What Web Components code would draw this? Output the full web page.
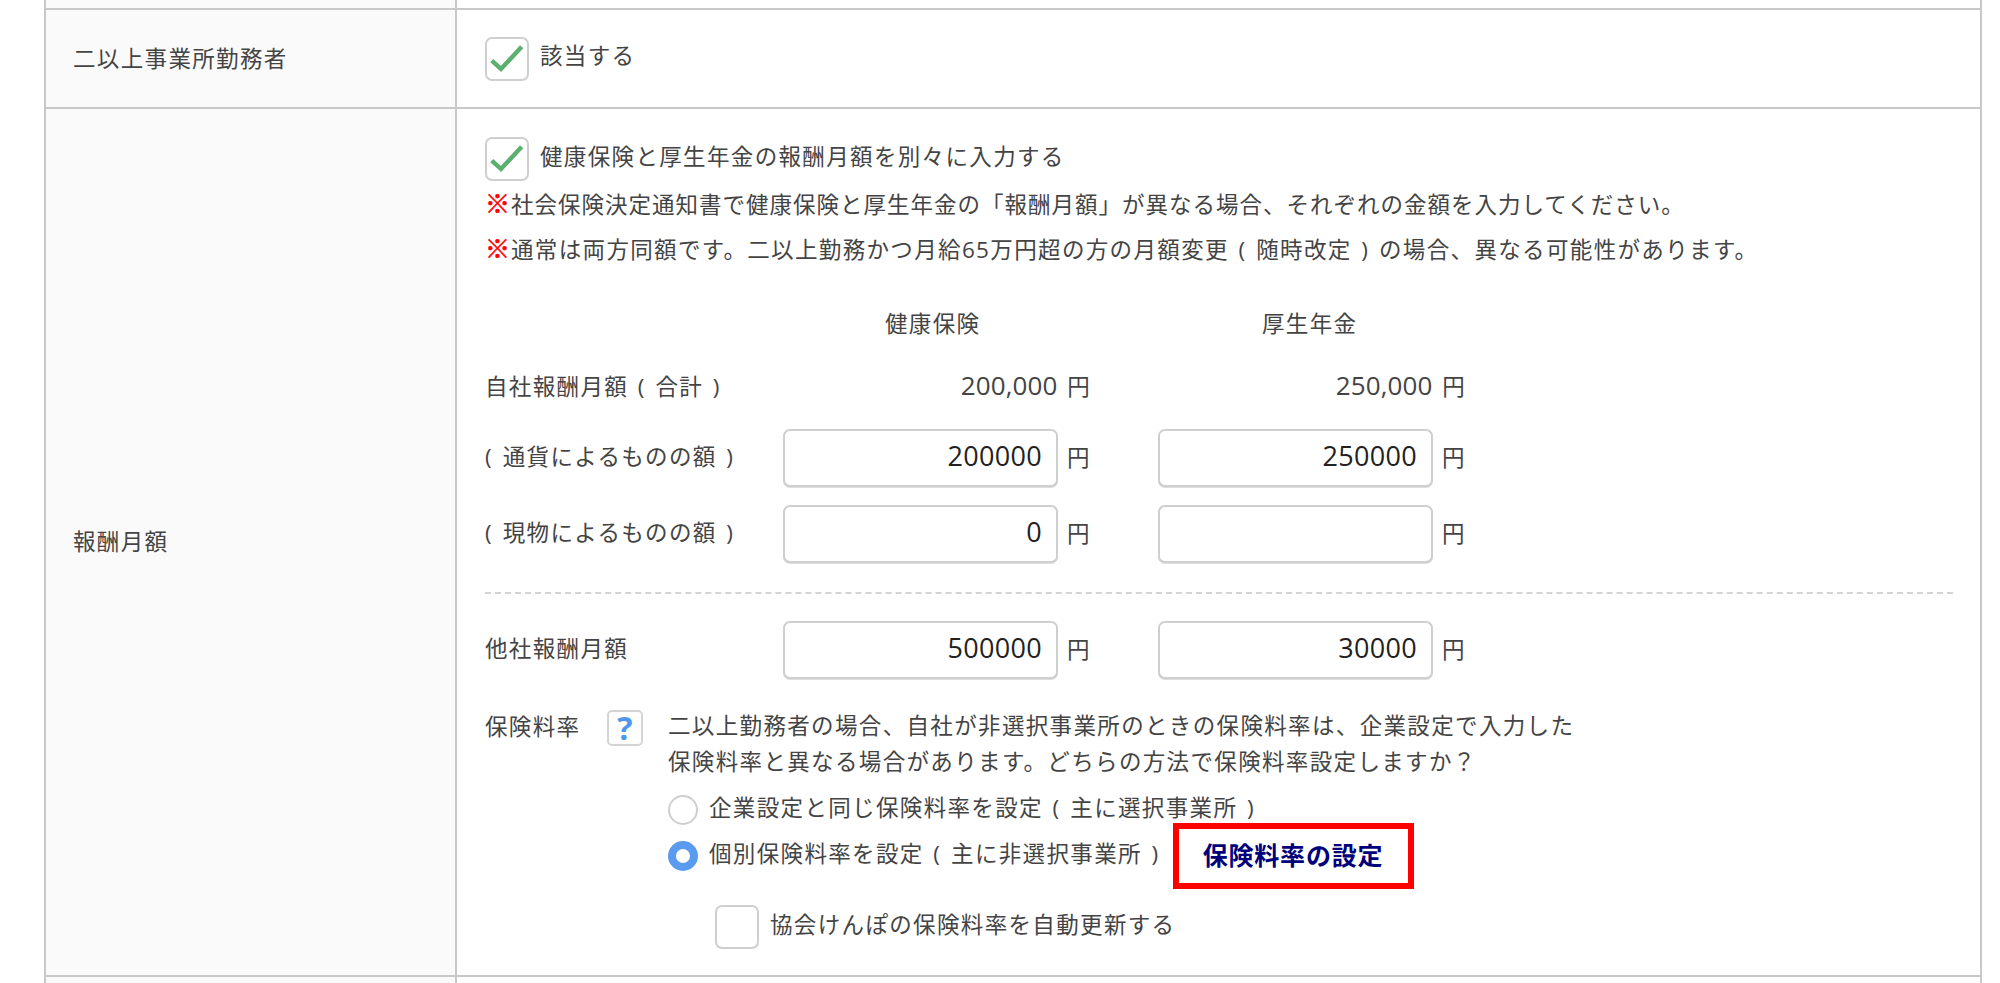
<!DOCTYPE html>
<html lang="ja"><head><meta charset="utf-8">
<style>
html,body{margin:0;padding:0;background:#fff;height:983px;overflow:hidden}
body{font-family:"Open Sans","Noto Sans CJK JP",sans-serif;font-size:22.5px;letter-spacing:1.35px;word-spacing:2.5px;color:#444}
</style></head><body>
<form-table>
  <form-row style="--h:10px"></form-row>
  <form-row style="--h:99px" center>
    <span slot="label">二以上事業所勤務者</span>
    <check-box checked>該当する</check-box>
  </form-row>
  <form-row style="--h:868px" pad>
    <span slot="label">報酬月額</span>
    <check-box checked>健康保険と厚生年金の報酬月額を別々に入力する</check-box>
    <note-line style="letter-spacing:1px">社会保険決定通知書で健康保険と厚生年金の「報酬月額」が異なる場合、それぞれの金額を入力してください。</note-line>
    <note-line>通常は両方同額です。二以上勤務かつ月給65万円超の方の月額変更 ( 随時改定 ) の場合、異なる可能性があります。</note-line>
    <amount-grid>
      <span class="h h1">健康保険</span><span class="h h2">厚生年金</span>
      <span class="l sum">自社報酬月額 ( 合計 )</span><span class="v v1"><b class="num">200,000</b> 円</span><span class="v v2"><b class="num">250,000</b> 円</span>
      <span class="l">( 通貨によるものの額 )</span><yen-input>200000</yen-input><yen-input>250000</yen-input>
      <span class="l">( 現物によるものの額 )</span><yen-input>0</yen-input><yen-input></yen-input>
      <hr>
      <span class="l">他社報酬月額</span><yen-input>500000</yen-input><yen-input>30000</yen-input>
    </amount-grid>
    <rate-section></rate-section>
  </form-row>
  <form-row style="--h:6px" last></form-row>
</form-table>
<script>
const def=(n,html)=>customElements.define(n,class extends HTMLElement{constructor(){super();this.attachShadow({mode:'open'}).innerHTML=html}});
def('form-table',`<style>:host{display:block;margin-left:44px;width:1938px;border-left:2px solid #c8c8c8;border-right:2px solid #c8c8c8;box-sizing:border-box}</style><slot></slot>`);
def('form-row',`<style>
:host{display:grid;grid-template-columns:411px 1fr;height:var(--h);box-sizing:border-box;border-bottom:2px solid #c8c8c8}
:host([last]){border-bottom:0}
.lab{background:#fafafa;border-right:2px solid #c8c8c8;display:flex;align-items:center;padding-left:27px;padding-bottom:3px}
.c{padding:0 27px 0 28px;display:flex;flex-direction:column;background:#fff}
:host([center]) .c{justify-content:center}
:host([pad]) .c{padding-top:28px}
</style><div class="lab"><slot name="label"></slot></div><div class="c"><slot></slot></div>`);
const CHECK=`<svg width="44" height="44" viewBox="0 0 44 44"><path d="M6.7 23.7 L16 32 L36.7 9.7" fill="none" stroke="#5bb070" stroke-width="4.4"/></svg>`;
customElements.define('check-box',class extends HTMLElement{constructor(){super();const on=this.hasAttribute('checked');
this.attachShadow({mode:'open'}).innerHTML=`<style>
:host{display:flex;align-items:center;gap:11px;height:44px}
.b{width:44px;height:44px;box-sizing:border-box;border:2px solid #cfcfcf;border-radius:7px;background:#fff;position:relative}
svg{position:absolute;left:-2px;top:-2px}
.t{margin-bottom:8px}
</style><div class="b">${on?CHECK:''}</div><div class="t"><slot></slot></div>`}});
def('note-line',`<style>:host{display:flex;align-items:center;height:45px}
.m{color:#f00;font-weight:900;width:26px;flex:none;font-size:25px;letter-spacing:0;-webkit-text-stroke:.6px #f00;line-height:1}</style><span class="m">※</span><span><slot></slot></span>`);
def('amount-grid',`<style>
:host{display:grid;grid-template-columns:298px 275px 100px 275px 100px 1fr;margin-top:27px;align-items:center}
::slotted(.l){grid-column:1;height:58px;display:flex;align-items:center;margin-bottom:18px;padding-bottom:6px;box-sizing:border-box}
::slotted(.h){height:50px;display:flex;align-items:center;grid-column-end:span 2;padding-bottom:2px;box-sizing:border-box}
::slotted(.h1){padding-left:102px;grid-column-start:2}
::slotted(.h2){padding-left:104px;grid-column-start:4}
::slotted(.sum){height:50px;margin-bottom:18px;margin-top:13px;padding-bottom:2px}
::slotted(.v){grid-column-end:span 2;text-align:right;padding-right:67px;margin-bottom:18px;margin-top:13px;height:50px;line-height:48px}
::slotted(.v1){grid-column-start:2}
::slotted(.v2){grid-column-start:4}
::slotted(yen-input){grid-column-end:span 2;margin-bottom:18px}
::slotted(hr){grid-column:1/-1;width:100%;margin:11px 0 27px;border:0;border-top:2px dashed #d4d4d4;height:0;box-sizing:content-box}
</style><slot></slot>`);
def('yen-input',`<style>
:host{display:flex;align-items:center;gap:9px;height:58px}
.i{width:275px;height:58px;box-sizing:border-box;border:2px solid #cfcfcf;border-radius:7px;background:#fff;text-align:right;padding-right:14px;color:#222;font-size:27px;letter-spacing:.3px;line-height:50px;box-shadow:0 1px 0 #ddd}
span{margin-bottom:3px}
</style><div class="i"><slot></slot></div><span>円</span>`);
def('rate-section',`<style>
:host{display:flex;margin-top:13px}
.lab{width:122px;flex:none;height:36px;line-height:33px}
.q{width:36px;height:36px;box-sizing:border-box;border:2px solid #d4d4d4;border-radius:5px;color:#4e96f0;font-weight:700;font-size:32px;letter-spacing:0;text-align:center;line-height:31px;margin-right:25px;flex:none}
.col{display:flex;flex-direction:column}
.p{line-height:36px}
.r{display:flex;align-items:center;gap:11px;height:30px}
.o{width:30px;height:30px;box-sizing:border-box;border-radius:50%;border:2px solid #cfcfcf;flex:none;background:#fff}
.o.on{border:8px solid #5b9bef}
.btn{margin:-19px 0 -18px 2px;width:241px;height:66px;box-sizing:border-box;border:6px solid #f00;color:#00007a;font-weight:700;font-size:25px;letter-spacing:.8px;display:flex;align-items:center;justify-content:center;flex:none;padding-bottom:4px}
.sub{display:flex;align-items:center;gap:11px;margin:34px 0 0 47px;height:44px}
.sub .b{width:44px;height:44px;box-sizing:border-box;border:2px solid #cfcfcf;border-radius:7px;flex:none}
.tx{position:relative;top:-4px}
</style>
<div class="lab">保険料率</div><div class="q">?</div>
<div class="col">
<div class="p" style="margin-top:-2px">二以上勤務者の場合、自社が非選択事業所のときの保険料率は、企業設定で入力した<br>保険料率と異なる場合があります。どちらの方法で保険料率設定しますか？</div>
<div class="r" style="margin-top:15px"><span class="o"></span><span class="tx">企業設定と同じ保険料率を設定 ( 主に選択事業所 )</span></div>
<div class="r" style="margin-top:16px"><span class="o on"></span><span class="tx">個別保険料率を設定 ( 主に非選択事業所 )</span><div class="btn">保険料率の設定</div></div>
<div class="sub"><span class="b"></span><span class="tx">協会けんぽの保険料率を自動更新する</span></div>
</div>`);
</script>
<style>
.num{font-weight:400;font-size:26px;letter-spacing:.1px}
</style>
</body></html>
